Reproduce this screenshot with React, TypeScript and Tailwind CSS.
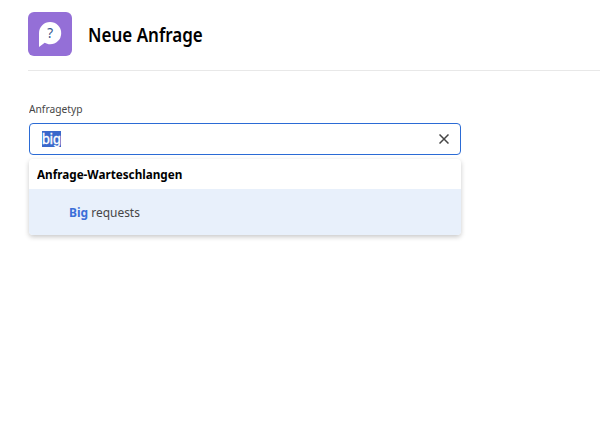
export default function App() {
  return (
    <main className="min-h-screen overflow-hidden bg-white font-['Noto_Sans','Open_Sans',sans-serif] text-black">
      <header className="ml-7 flex h-[71px] items-start border-b border-[#e8e8e8] pt-3">
        <div className="flex size-11 items-center justify-center rounded-[6px] bg-[#946fd7]">
          <svg width="44" height="44" viewBox="0 0 44 44" aria-hidden="true">
            <path d="M11 35V21.2a11.1 11.1 0 1 1 11.1 11.1c-2 0-3.9-.6-5.4-1.5z" fill="#fff" />
            <text x="22.3" y="26" textAnchor="middle" fontSize="13.5" fill="#31568b">?</text>
          </svg>
        </div>
        <h1 className="ml-4 mt-[9px] origin-left scale-x-[0.85] text-[20px] leading-7 font-semibold whitespace-nowrap">Neue Anfrage</h1>
      </header>
      <section className="ml-[29px] w-[432px] pt-[30px]">
        <label className="block h-[22px] origin-left scale-x-[0.89] text-[11.5px] leading-4 text-[#464646]">Anfragetyp</label>
        <div className="flex h-8 items-center justify-between rounded-[4px] border border-[#2b6bd5] pr-[11px] pl-3">
          <span className="h-4 bg-[#3a68cb] font-['Liberation_Sans',Arial,sans-serif] text-[14px] leading-4 text-white [-webkit-text-stroke:0.3px_white]">big</span>
          <svg width="10" height="10" viewBox="0 0 10 10" stroke="#464646" strokeWidth="1.5" aria-hidden="true">
            <path d="M.5.5l9 9M9.5.5l-9 9" />
          </svg>
        </div>
        <div className="mt-1 overflow-hidden rounded-[4px] bg-white shadow-[0_2px_5px_rgba(0,0,0,0.22)]">
          <div className="h-[30px] pl-2 text-[13px] leading-[30px] font-bold whitespace-nowrap">
            <span className="inline-block origin-left scale-x-[0.9]">Anfrage-Warteschlangen</span>
          </div>
          <div className="h-[46px] bg-[#e8f0fb] pl-10 text-[13px] leading-[46px] whitespace-nowrap text-[#464646]">
            <span className="inline-block origin-left scale-x-[0.92]">
              <b className="font-bold text-[#3b6fd8]">Big</b> requests
            </span>
          </div>
        </div>
      </section>
    </main>
  );
}
